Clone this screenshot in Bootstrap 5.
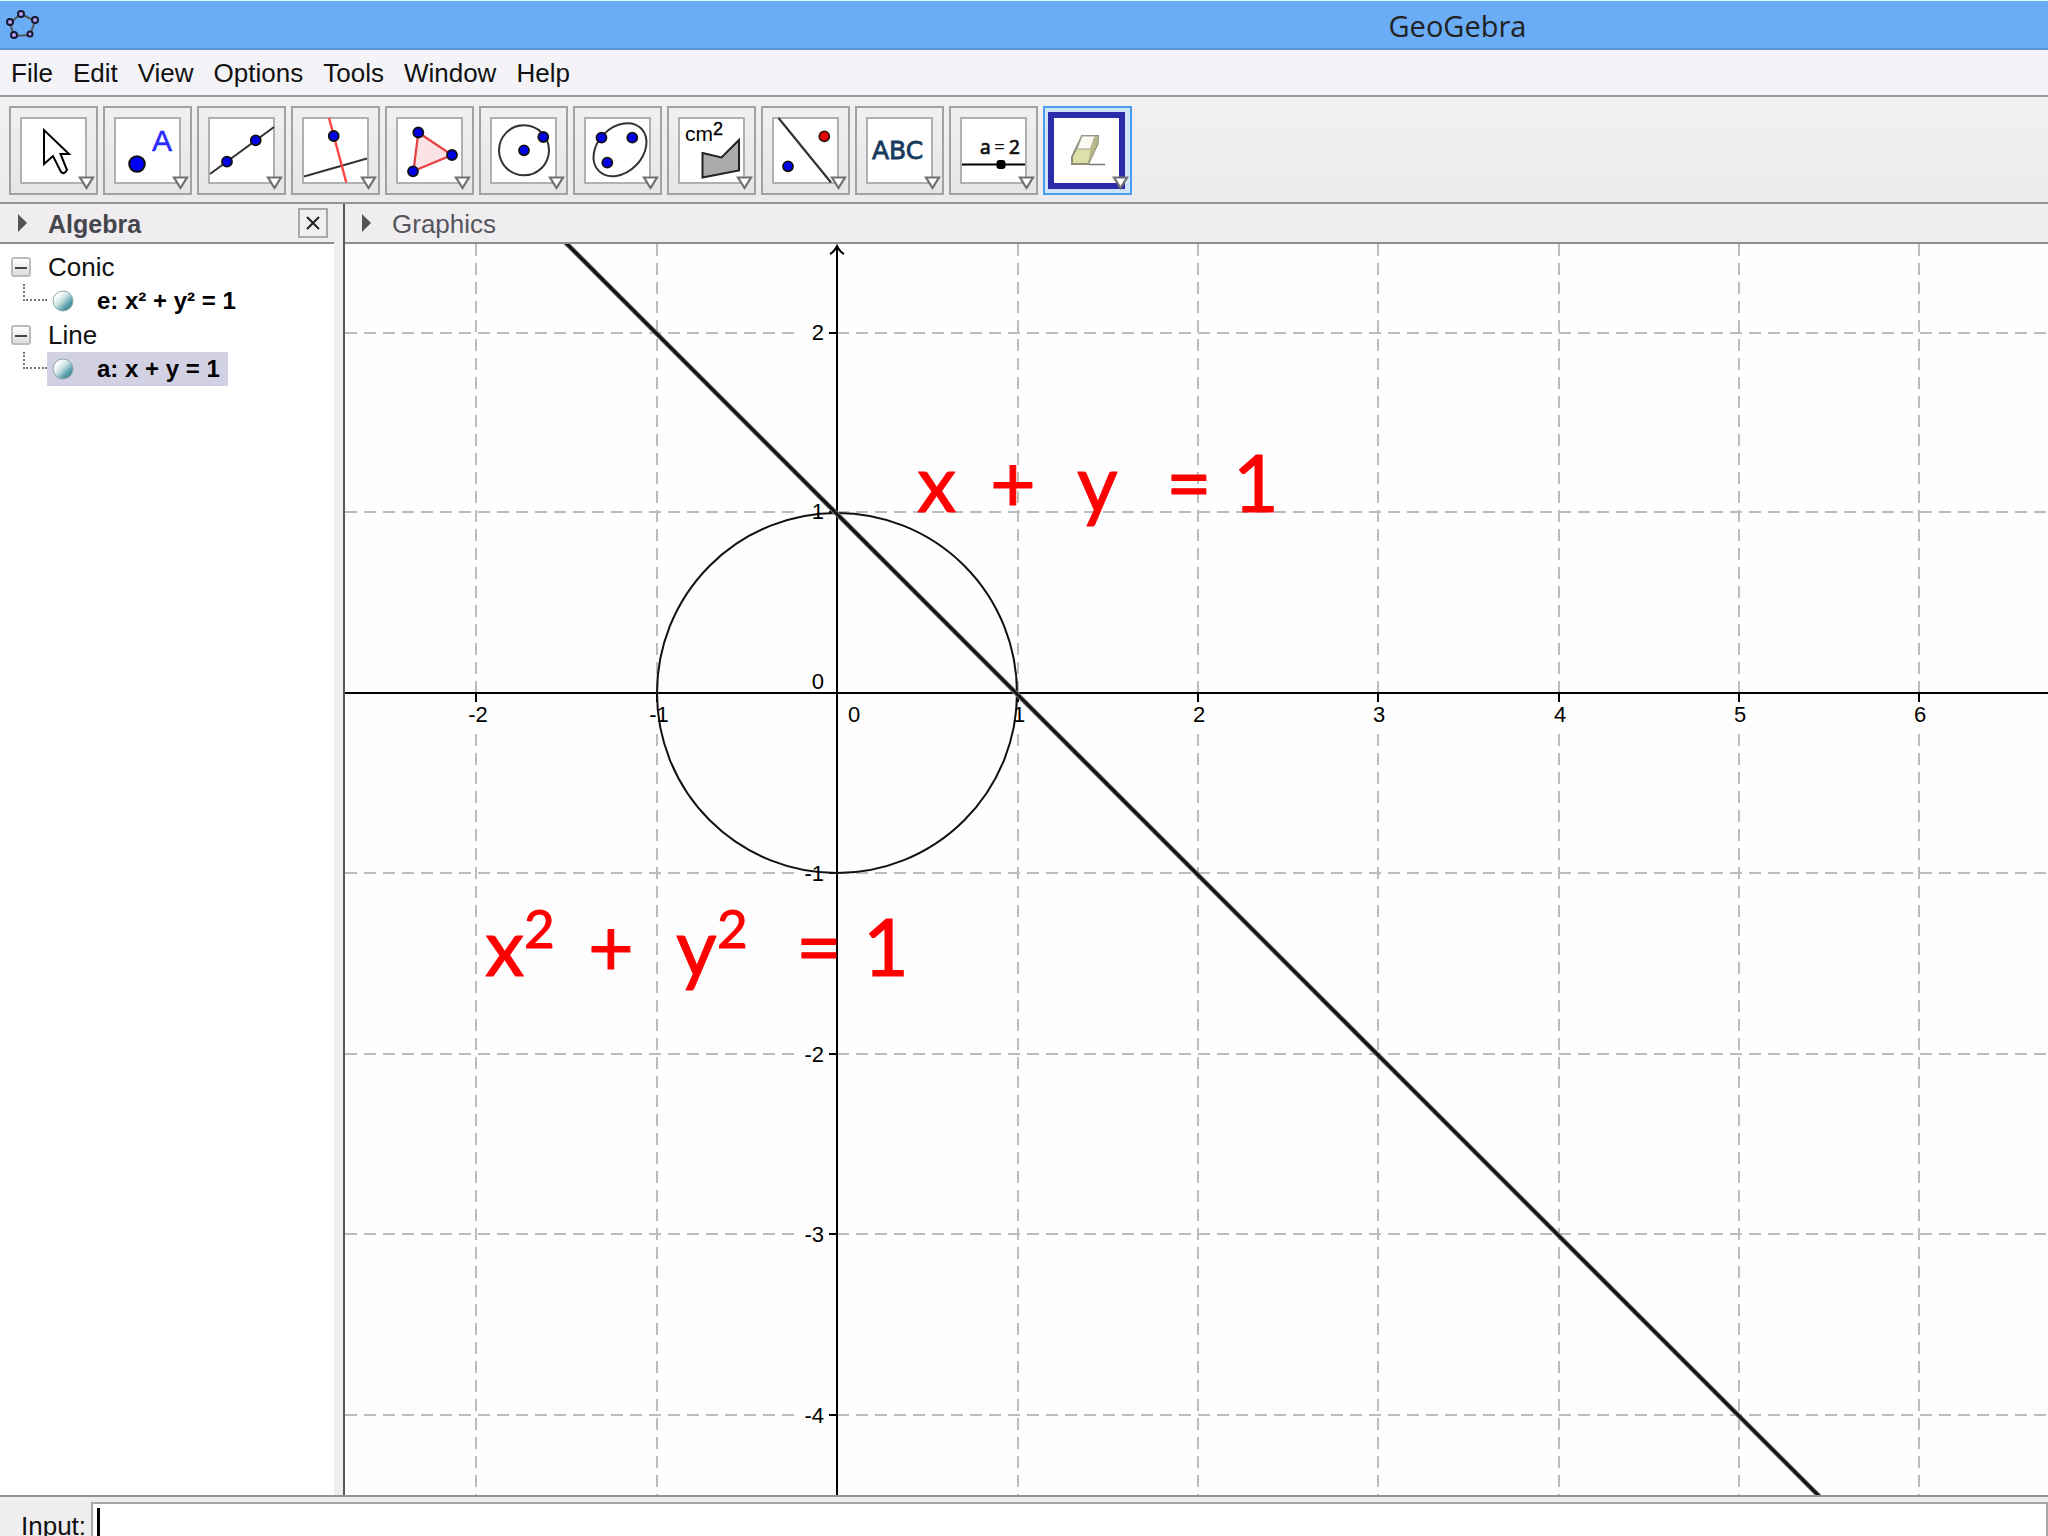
<!DOCTYPE html>
<html lang="en">
<head>
<meta charset="utf-8">
<meta name="viewport" content="width=device-width, initial-scale=1">
<title>GeoGebra</title>
<link rel="stylesheet" href="https://cdn.jsdelivr.net/npm/bootstrap@5.3.0/dist/css/bootstrap.min.css">
<style>
  body { font-family: "Liberation Sans", Arial, sans-serif; font-size: 26px; line-height: 34px; color: #111; background: #fff; }
  .titlebar { height: 50px; background: #6aacf5; border-top: 1px solid #dff; border-bottom: 2px solid #5c97d8; }
  .app-logo { margin-left: 6px; }
  .app-title { position: absolute; left: 67.8%; top: 0; font: 29px/50px "Open Sans", "Noto Sans", sans-serif; color: #222; }
  .menubar { height: 47px; background: #f4f4f8; border-bottom: 2px solid #999; padding: 0 11px; gap: 20px; }
  .menubar a { color: #111; text-decoration: none; line-height: 46px; }
  .toolbar { height: 107px; background: linear-gradient(#f1f1f3, #ebebed); border-bottom: 2px solid #949494; padding: 9px; gap: 5px; }
  .tool { width: 89px; height: 89px; flex: none; padding: 0; border: 2px solid #a2a2a5; background: linear-gradient(#f0f0f2, #e6e6e8); }
  .tool svg { display: block; width: 85px; height: 85px; }
  .tool.active { border-color: #4a9df0; background: #cfe3f9; }
  .side { width: 343px; flex: none; background: #efedf0; padding-right: 9px; }
  .view-head { height: 40px; flex: none; background: #efedf0; border-bottom: 2px solid #8f8f91; color: #45454d; line-height: 38px; }
  .view-head strong, .view-head span { padding-top: 2px; }
  .side .view-head { font-size: 25px; padding: 0 6px 0 17px; gap: 21px; }
  .plot-view { border-left: 2px solid #58585c; min-width: 0; }
  .plot-view .view-head { padding-left: 16px; gap: 21px; color: #55555b; }
  .close-btn { width: 30px; height: 30px; padding: 0; border: 2px solid #a9a9ab; background: #f0f0f2; line-height: 0; }
  .tree { background: #fff; padding: 6px 0 0 11px; }
  .tree ul, .tree { list-style: none; margin: 0; }
  .tree ul { padding: 0; }
  .node { height: 34px; gap: 17px; }
  .fold { width: 20px; height: 20px; padding: 0; border: 2px solid #bcbcc0; border-radius: 3px; background: linear-gradient(#fff, #ddd); line-height: 0; }
  .branch { width: 24px; height: 17px; margin: 0 0 17px 12px; border-left: 2px dotted #777; border-bottom: 2px dotted #777; }
  .leaf { height: 34px; font-size: 24px; font-weight: bold; padding: 0 8px 0 5px; gap: 23px; color: #000; }
  .leaf.selected { background: #d2d1e3; }
  .plot { background: #fefefe; min-height: 0; }
  .plot svg { display: block; width: 100%; height: 100%; }
  .ticks { font-family: "Liberation Sans", Arial, sans-serif; font-size: 22px; fill: #000; }
  .formula { font-family: Lato, Carlito, sans-serif; font-size: 79px; fill: #f00; stroke: #f00; stroke-width: 1px; stroke-linejoin: round; }
  .formula .power { font-size: 53px; }
  .inputbar { height: 41px; flex: none; background: #efedf0; border-top: 2px solid #949494; padding-left: 21px; gap: 5px; }
  .inputbar label { line-height: 58px; }
  .inputbar input { height: 60px; margin-top: 5px; border: 2px solid #a6a6a6; border-radius: 0; padding: 4px; background: #fff; min-width: 0; }
  .input-wrap { position: relative; min-width: 0; }
  .caret { position: absolute; left: 6px; top: 11px; width: 3px; height: 40px; background: #000; }
</style>
<script src="https://cdn.jsdelivr.net/npm/bootstrap@5.3.0/dist/js/bootstrap.bundle.min.js"></script>
</head>
<body class="vh-100 overflow-hidden d-flex flex-column">

<header class="titlebar position-relative d-flex align-items-center flex-shrink-0">
  <svg class="app-logo" width="36" height="36" viewBox="6 7 36 36" aria-hidden="true">
    <path d="M21 14L35 21L30 35L14 36L10 23Z" fill="none" stroke="#555" stroke-width="2"/>
    <g fill="#b9a5f5" stroke="#181830" stroke-width="2"><circle cx="21" cy="14" r="3"/><circle cx="35" cy="20" r="3"/><circle cx="30" cy="34" r="2.5"/><circle cx="14" cy="35" r="3"/><circle cx="10" cy="22" r="3"/></g>
  </svg>
  <span class="app-title">GeoGebra</span>
</header>

<nav class="menubar d-flex flex-shrink-0" aria-label="Main menu">
  <a href="#">File</a><a href="#">Edit</a><a href="#">View</a><a href="#">Options</a><a href="#">Tools</a><a href="#">Window</a><a href="#">Help</a>
</nav>

<svg width="0" height="0" class="position-absolute" aria-hidden="true">
  <defs>
    <rect id="frame" x="10" y="10" width="65" height="65" fill="#fff" stroke="#b0b0b2" stroke-width="2"/>
    <path id="more" d="M69 69.500H82L75.500 80Z" fill="#fff" stroke="#707073" stroke-width="2.200"/>
    <circle id="pt" r="5" fill="#0000e6" stroke="#111" stroke-width="1.800"/>
    <linearGradient id="orb" x1=".1" y1=".1" x2=".9" y2=".9"><stop offset=".15" stop-color="#fff"/><stop offset=".45" stop-color="#c9e2e0"/><stop offset=".75" stop-color="#5b9fae"/><stop offset="1" stop-color="#3c7f92"/></linearGradient>
  </defs>
</svg>

<div class="toolbar d-flex flex-shrink-0" role="toolbar" aria-label="Tools">
  <button class="tool" aria-label="Move"><svg viewBox="0 0 85 85"><use href="#frame"/><path d="M33 22V56L42 48L50 64Q53 67 56 62L49.500 46H58Z" fill="#fff" stroke="#000" stroke-width="2"/><use href="#more"/></svg></button>
  <button class="tool" aria-label="Point"><svg viewBox="0 0 85 85"><use href="#frame"/><circle cx="32" cy="56" r="7.800" fill="#00f" stroke="#111" stroke-width="2"/><text x="47" y="43" font-size="30" fill="#2a2aff" stroke="#2a2aff" stroke-width=".5" font-family="Liberation Sans">A</text><use href="#more"/></svg></button>
  <button class="tool" aria-label="Line"><svg viewBox="0 0 85 85"><use href="#frame"/><path d="M11 66L75 19" stroke="#333" stroke-width="2"/><use href="#pt" x="28" y="53.700"/><use href="#pt" x="56.700" y="32.300"/><use href="#more"/></svg></button>
  <button class="tool" aria-label="Perpendicular line"><svg viewBox="0 0 85 85"><use href="#frame"/><path d="M11 68.500L74 50.500" stroke="#333" stroke-width="2"/><path d="M36 10L53.300 74.500" stroke="#f44" stroke-width="2.400"/><use href="#pt" x="40.700" y="28"/><use href="#more"/></svg></button>
  <button class="tool" aria-label="Polygon"><svg viewBox="0 0 85 85"><use href="#frame"/><path d="M31.300 24.500L65 47L26.500 63Z" fill="#fbe3e5" stroke="#e64040" stroke-width="2.200"/><use href="#pt" x="31.300" y="24.500"/><use href="#pt" x="65" y="47"/><use href="#pt" x="26" y="63.300"/><use href="#more"/></svg></button>
  <button class="tool" aria-label="Circle"><svg viewBox="0 0 85 85"><use href="#frame"/><circle cx="43" cy="42.300" r="25" fill="none" stroke="#333" stroke-width="2"/><use href="#pt" x="43" y="42.300"/><use href="#pt" x="62.300" y="29"/><use href="#more"/></svg></button>
  <button class="tool" aria-label="Ellipse"><svg viewBox="0 0 85 85"><use href="#frame"/><ellipse cx="45" cy="41.700" rx="30" ry="22.400" transform="rotate(-45 45 41.700)" fill="none" stroke="#333" stroke-width="2"/><use href="#pt" x="26.500" y="29.700"/><use href="#pt" x="57.300" y="29.700"/><use href="#pt" x="32.300" y="54.700"/><use href="#more"/></svg></button>
  <button class="tool" aria-label="Area"><svg viewBox="0 0 85 85"><use href="#frame"/><text x="16" y="33" font-size="21" font-family="Liberation Sans">cm</text><text x="44" y="27" font-size="18" font-family="Liberation Sans" stroke="#000" stroke-width=".4">2</text><path d="M33.500 45L52.500 49.500L70 32V62.500L33.500 69.500Z" fill="#ababab" stroke="#222" stroke-width="2"/><use href="#more"/></svg></button>
  <button class="tool" aria-label="Reflect"><svg viewBox="0 0 85 85"><use href="#frame"/><path d="M15.500 10L68 74.500" stroke="#333" stroke-width="2.200"/><circle cx="61.300" cy="28.300" r="5" fill="#e80000" stroke="#311" stroke-width="1.800"/><use href="#pt" x="25" y="58.300"/><use href="#more"/></svg></button>
  <button class="tool" aria-label="Text"><svg viewBox="0 0 85 85"><use href="#frame"/><text x="15" y="51" font-size="25" font-family="DejaVu Sans" fill="#173a5e" stroke="#173a5e" stroke-width=".8">ABC</text><use href="#more"/></svg></button>
  <button class="tool" aria-label="Slider"><svg viewBox="0 0 85 85"><use href="#frame"/><text x="29" y="46" font-size="19" font-family="Noto Sans" stroke="#111" stroke-width=".7" fill="#111">a</text><text x="43" y="46" font-size="19" font-family="Noto Sans" fill="#111">=</text><text x="58" y="46" font-size="19" font-family="Noto Sans" stroke="#111" stroke-width=".7" fill="#111">2</text><path d="M11 56.500H74" stroke="#000" stroke-width="2.200"/><rect x="45.500" y="52" width="9" height="9" rx="3"/><use href="#more"/></svg></button>
  <button class="tool active" aria-label="Delete"><svg viewBox="0 0 85 85"><rect x="6" y="7" width="71" height="71" fill="#fff" stroke="#2b2bab" stroke-width="6"/><path d="M37 28H53L52.500 36L43 56H27V49Z" fill="#dde0a8" stroke="#8d8d78" stroke-width="2"/><path d="M37 28H50L45.500 41H32Z" fill="#fbfbf4" stroke="#a5a596"/><path d="M45.500 41L43 56L52.500 36L53 28H50Z" fill="#b7b98a"/><path d="M44 56.500H60" stroke="#777" stroke-width="1.500"/><use href="#more"/></svg></button>
</div>

<main class="d-flex flex-grow-1 overflow-hidden">
  <section class="side d-flex flex-column">
    <div class="view-head d-flex align-items-center">
      <svg width="10" height="18" viewBox="0 0 10 18" aria-hidden="true"><path d="M1 0L10 9L1 18Z" fill="#555"/></svg>
      <strong class="flex-grow-1">Algebra</strong>
      <button class="close-btn" aria-label="Close Algebra"><svg width="14" height="14" viewBox="0 0 14 14"><path d="M1 1L13 13M13 1L1 13" stroke="#222" stroke-width="2"/></svg></button>
    </div>
    <ul class="tree flex-grow-1">
      <li>
        <div class="node d-flex align-items-center"><button class="fold" aria-label="Collapse Conic"><svg width="12" height="2"><path d="M0 1H12" stroke="#444" stroke-width="2"/></svg></button><span>Conic</span></div>
        <ul><li class="d-flex"><span class="branch"></span><span class="leaf d-flex align-items-center"><svg width="22" height="22" viewBox="0 0 22 22"><circle cx="11" cy="11" r="10" fill="url(#orb)" stroke="#8aa8a8"/></svg><span>e: x² + y² = 1</span></span></li></ul>
      </li>
      <li>
        <div class="node d-flex align-items-center"><button class="fold" aria-label="Collapse Line"><svg width="12" height="2"><path d="M0 1H12" stroke="#444" stroke-width="2"/></svg></button><span>Line</span></div>
        <ul><li class="d-flex"><span class="branch"></span><span class="leaf selected d-flex align-items-center"><svg width="22" height="22" viewBox="0 0 22 22"><circle cx="11" cy="11" r="10" fill="url(#orb)" stroke="#8aa8a8"/></svg><span>a: x + y = 1</span></span></li></ul>
      </li>
    </ul>
  </section>

  <section class="plot-view d-flex flex-column flex-grow-1">
    <div class="view-head d-flex align-items-center">
      <svg width="10" height="18" viewBox="0 0 10 18" aria-hidden="true"><path d="M1 0L10 9L1 18Z" fill="#555"/></svg>
      <span>Graphics</span>
    </div>
    <div class="plot flex-grow-1">
      <!-- origin of the axes is at 0,0; grid lines pause where the axis labels sit -->
      <svg viewBox="-492 -449 1703 1251" preserveAspectRatio="xMinYMin slice" role="img" aria-label="Unit circle and the line x + y = 1">
        <g stroke="#bcbcbc" stroke-width="2" stroke-dasharray="12 7" fill="none">
          <path d="M-361 -449V0M-180 -449V0M181 -449V0M361 -449V0M541 -449V0M722 -449V0M902 -449V0M1082 -449V0"/>
          <path d="M-361 41V802M-180 41V802M181 41V802M361 41V802M541 41V802M722 41V802M902 41V802M1082 41V802"/>
          <path d="M-492 -360H-42M0 -360H1211M-492 -181H-42M0 -181H1211M-492 180H-42M0 180H1211M-492 361H-42M0 361H1211M-492 541H-42M0 541H1211M-492 722H-42M0 722H1211"/>
        </g>
        <g stroke="#000" stroke-width="2" fill="none">
          <path d="M-492 0H1211M0 -447V802M-7 -439Q-3 -441 0 -447Q3 -441 7 -439"/>
          <path d="M-361 0V9M-180 0V9M181 0V9M361 0V9M541 0V9M722 0V9M902 0V9M1082 0V9"/>
          <path d="M-8 -360H0M-8 -181H0M-8 180H0M-8 361H0M-8 541H0M-8 722H0"/>
        </g>
        <circle r="180" stroke="#111" stroke-width="2" fill="none"/>
        <path d="M-281 -460L1099 920" stroke="#777" stroke-width="5"/>
        <path d="M-281 -460L1099 920" stroke="#111" stroke-width="3"/>
        <g class="ticks" text-anchor="middle">
          <text x="-359" y="29">-2</text><text x="-178" y="29">-1</text><text x="17" y="29">0</text><text x="182" y="29">1</text><text x="362" y="29">2</text><text x="542" y="29">3</text><text x="723" y="29">4</text><text x="903" y="29">5</text><text x="1083" y="29">6</text>
        </g>
        <g class="ticks" text-anchor="end">
          <text x="-13" y="-353">2</text><text x="-13" y="-174">1</text><text x="-13" y="-4">0</text><text x="-13" y="188">-1</text><text x="-13" y="369">-2</text><text x="-13" y="549">-3</text><text x="-13" y="730">-4</text>
        </g>
        <text class="formula" y="-181"><tspan x="80">x</tspan><tspan x="153">+</tspan><tspan x="240">y</tspan><tspan x="329">=</tspan><tspan x="396">1</tspan></text>
        <text class="formula" y="283"><tspan x="-352">x</tspan><tspan class="power" x="-313" y="255">2</tspan><tspan x="-249" y="283">+</tspan><tspan x="-161">y</tspan><tspan class="power" x="-120" y="255">2</tspan><tspan x="-41" y="283">=</tspan><tspan x="26">1</tspan></text>
      </svg>
    </div>
  </section>
</main>

<footer class="inputbar d-flex overflow-hidden">
  <label for="cmd">Input:</label>
  <div class="input-wrap flex-grow-1"><input id="cmd" class="w-100" type="text"><span class="caret"></span></div>
</footer>
</body>
</html>
